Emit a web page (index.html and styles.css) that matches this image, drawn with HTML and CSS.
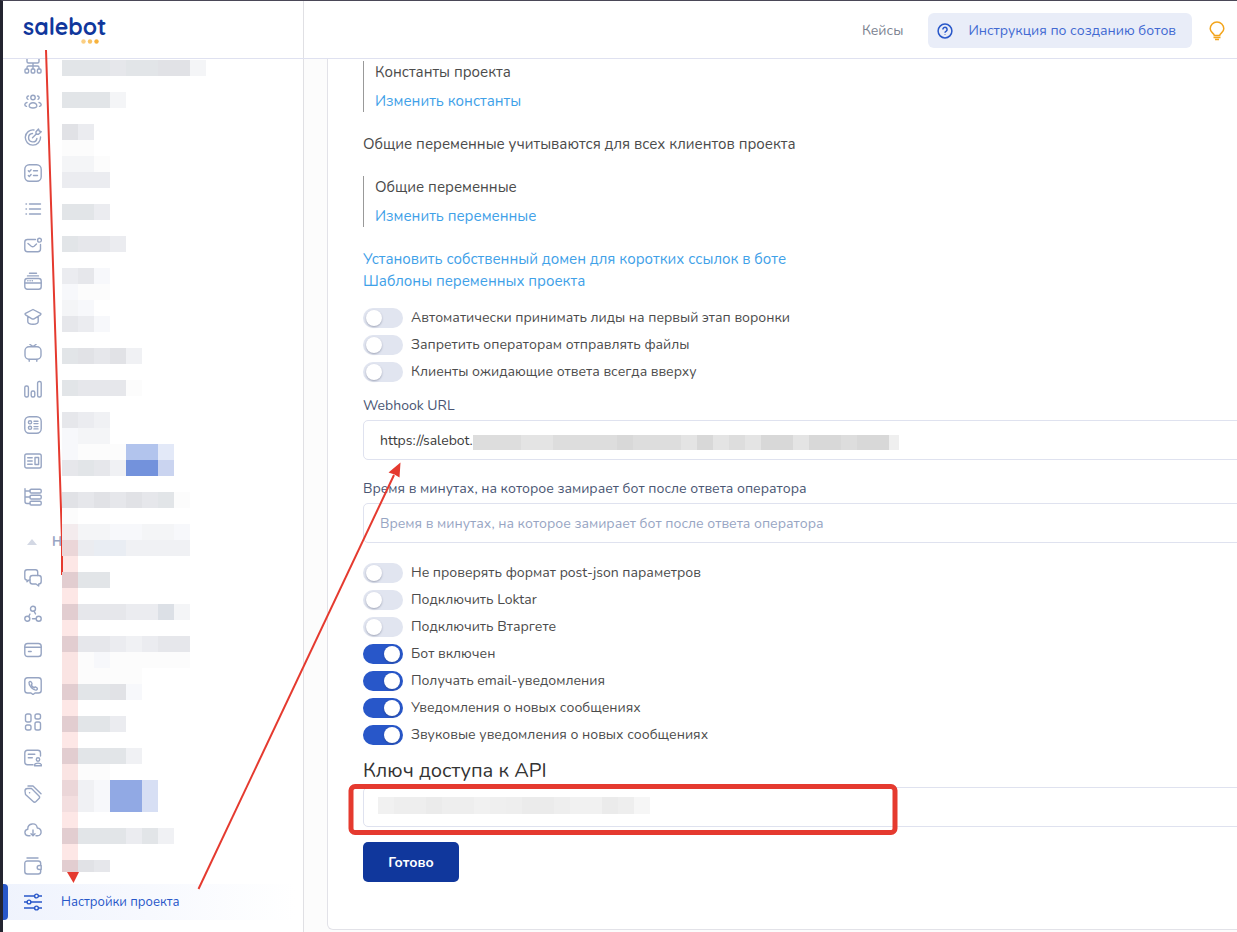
FILE: index.html
```html
<!DOCTYPE html>
<html lang="ru">
  <head>
    <meta charset="UTF-8" />
    <meta name="viewport" content="width=device-width, initial-scale=1.0" />
    <title>Настройки проекта</title>
    <link rel="stylesheet" href="styles.css">
  </head>
  <body>
    <header class="header">
      <a class="logo" href="#">salebot
        <svg class="logo-dots" viewBox="0 0 18 5"><circle cx="2.5" cy="2.5" r="2.2" fill="#fbcf83" /><circle cx="9" cy="2.5" r="2.2" fill="#f9c263" /><circle cx="15.5" cy="2.5" r="2.2" fill="#f7b23c" /></svg>
      </a>
      <div class="header-right">
        <a class="cases" href="#">Кейсы</a>
        <a class="guide" href="#">
          <svg class="guide-icon" viewBox="0 0 16 16"><circle cx="8" cy="8" r="6.9" /><path d="M5.9 6.4a2.1 2.1 0 1 1 3.3 1.7C8.3 8.6 8 8.900 8 9.700M8 11.400v.6" /></svg>
          Инструкция по созданию ботов
        </a>
        <a class="bulb" href="#" aria-label="Идеи">
          <svg viewBox="0 0 16 20"><path d="M5.300 14.500C5.200 12.400 1.200 11.500 1.200 7.800a6.800 6.800 0 0 1 13.600 0c0 3.700-4 4.600-4.100 6.700zM4.500 16.500h7M6 18.600h4" /></svg>
        </a>
      </div>
    </header>

    <div class="layout">
      <aside class="sidebar">
        <nav>
          <ul class="menu">
            <li><a href="#"><svg viewBox="0 0 18 18"><path d="M3 1v4.500q0 1.500 1.500 1.500h9q1.500 0 1.500-1.500V1M9 7v6M3 13v-1.500q0-1.500 1.500-1.500h9q1.500 0 1.500 1.500V13" /><rect x="1" y="13" width="3.600" height="4" rx="1" /><rect x="7.200" y="13" width="3.600" height="4" rx="1" /><rect x="13.400" y="13" width="3.600" height="4" rx="1" /></svg></a></li>
            <li><a href="#"><svg viewBox="0 0 18 18"><circle cx="9" cy="5.500" r="2.200" /><path d="M5.200 14.200c-.5-4.600 8.100-4.600 7.600 0q-.3 1.800-3.800 1.800t-3.800-1.800z" /><path d="M4.500 4a1.700 1.700 0 0 0-.5 3.300M13.500 4a1.700 1.700 0 0 1 .5 3.300M3 10.500C.2 11 .2 13.900 2.500 14.400M15 10.500c2.800.5 2.800 3.400.5 3.900" /></svg></a></li>
            <li><a href="#"><svg viewBox="0 0 18 18"><path d="M10 2a7.600 7.600 0 1 0 6.500 7M8.500 5.500a4.200 4.200 0 1 0 4.400 5M8.500 9.800l4-4M12 6.200V3.700L14.500 1l.7 2 2 .7-2.700 2.500z" /></svg></a></li>
            <li><a href="#"><svg viewBox="0 0 18 18"><rect x=".8" y=".8" width="16.400" height="16.400" rx="4.500" /><path d="M4.300 6.700l1 1 1.800-2M4.300 11.500l1 1 1.800-2M9.500 6.700h4M9.500 11.500h4" /></svg></a></li>
            <li><a href="#"><svg viewBox="0 0 18 18"><path d="M5.500 4h11M5.500 9h11M5.500 14h11M2 4h.5M2 9h.5M2 14h.5" /></svg></a></li>
            <li><a href="#"><svg viewBox="0 0 18 18"><path d="M11.500 3.500H3.500Q.8 3.500.8 6v7q0 2.700 2.700 2.700h10.300q2.700 0 2.700-2.700V8.500M4 7.500l3.300 2.700q1.400 1 2.800 0L12.500 8" /><circle cx="15.500" cy="4.200" r="1.900" /></svg></a></li>
            <li><a href="#"><svg viewBox="0 0 18 18"><rect x=".8" y="6.500" width="16.400" height="10.700" rx="2.500" /><path d="M.8 11h16.400M5.500 1.200h7M3.500 3.900h11M3.800 8.700h.2M6 8.700h.2M8.200 8.700h.2" /></svg></a></li>
            <li><a href="#"><svg viewBox="0 0 18 18"><path d="M9 1.500l7.500 3.800q.8.700 0 1.500L10 10.800q-1 .5-2 0L1.500 6.800q-.8-.8 0-1.500zM3.800 8.500v5c0 3.600 10.400 3.600 10.400 0v-5" /></svg></a></li>
            <li><a href="#"><svg viewBox="0 0 18 18"><rect x="1" y="2.700" width="16" height="12.500" rx="4" /><path d="M6 .5l3 2 3-2M5.200 15.500v1.700M12.800 15.500v1.700" /></svg></a></li>
            <li><a href="#"><svg viewBox="0 0 18 18"><rect x=".8" y="6" width="3.600" height="11" rx="1.500" /><rect x="7.200" y="11" width="3.600" height="6" rx="1.500" /><rect x="13.600" y="1.500" width="3.600" height="15.500" rx="1.500" /></svg></a></li>
            <li><a href="#"><svg viewBox="0 0 18 18"><rect x=".8" y=".8" width="16.400" height="16.400" rx="4.500" /><circle cx="6" cy="6.300" r="1.600" /><circle cx="6" cy="11.800" r="1.600" /><path d="M10 5.300h4M10 7.600h4M10 10.600h4M10 12.900h4" /></svg></a></li>
            <li><a href="#"><svg viewBox="0 0 18 18"><rect x=".8" y="2" width="16.400" height="14" rx="1.800" /><rect x="11" y="5.500" width="3.600" height="7" /><path d="M3.700 5.800h4.500M3.700 9h4.500M3.700 12.200h4.500" /></svg></a></li>
            <li><a href="#"><svg viewBox="0 0 18 18"><path d="M1 .8v12.700q0 2 2 2h3M1 3h5M1 9h5" /><rect x="6" y="1.200" width="11.200" height="3.800" rx="1.200" /><rect x="6" y="7.200" width="11.200" height="3.800" rx="1.200" /><rect x="6" y="13.200" width="11.200" height="3.800" rx="1.200" /></svg></a></li>
          </ul>
          <div class="menu-heading"><svg class="caret" viewBox="0 0 10 6"><path d="M0 6l5-6 5 6z" /></svg>Н</div>
          <ul class="menu">
            <li><a href="#"><svg viewBox="0 0 18 18"><path d="M6 11H5l-2 1.800V11Q.8 11 .8 8.800V3Q.8.800 3 .800h8.500q2.200 0 2.200 2.200v3.500" /><path d="M8.500 6.500h6.200q2.500 0 2.500 2.500v3.500q0 2.500-2.500 2.500v2L12 15H8.500Q6 15 6 12.500V9q0-2.500 2.500-2.500z" /></svg></a></li>
            <li><a href="#"><svg viewBox="0 0 18 18"><circle cx="9" cy="3.700" r="2.500" /><circle cx="3.300" cy="13.800" r="2.500" /><circle cx="14.700" cy="13.800" r="2.500" /><path d="M10 6.200l1.500 2.700M4.700 11.500L6 9M8.500 13.800h3" /></svg></a></li>
            <li><a href="#"><svg viewBox="0 0 18 18"><rect x=".8" y="2.500" width="16.400" height="13" rx="2.800" /><path d="M1 6.300h16M4.500 10.500h2.700" /></svg></a></li>
            <li><a href="#"><svg viewBox="0 0 18 18"><path d="M3.500.8h11q2.700 0 2.700 2.700v10q0 2.500-2.700 2.500H11l-2 1.500L7 16H3.500Q.8 16 .8 13.500v-10Q.8.800 3.500.800z" /><path d="M5 5.300q1-1.500 2-.5l1 1.500q.2.800-.8 1.600 1 2 2.900 2.800.8-1 1.600-.7l1.400 1q.8 1-.6 2C9.500 13.800 4.500 9 5 5.300z" /></svg></a></li>
            <li><a href="#"><svg viewBox="0 0 18 18"><rect x="1.500" y="1" width="5.500" height="8" rx="1.800" /><rect x="11" y="1" width="5.500" height="5" rx="1.800" /><rect x="1.500" y="12" width="5.500" height="5" rx="1.800" /><rect x="11" y="9" width="5.500" height="8" rx="1.800" /></svg></a></li>
            <li><a href="#"><svg viewBox="0 0 18 18"><path d="M9 15.800H3.500Q.8 15.800.8 13V4q0-2.700 2.700-2.700h10.300q2.700 0 2.700 2.700v3M4.300 5.200h6.500M4.300 8.700h4" /><circle cx="14" cy="10.500" r="1.700" /><path d="M10.500 16.700c0-3.500 7-3.500 7 0z" /></svg></a></li>
            <li><a href="#"><svg viewBox="0 0 18 18"><path d="M1 6q0-2.500 2.500-2.500h4L15 11q1.300 1.300 0 2.500l-3 3q-1.500 1.300-2.800 0L1.500 9.500zM4 1h5l8 7.800M5.500 7.700h.2" /></svg></a></li>
            <li><a href="#"><svg viewBox="0 0 18 18"><path d="M6 14.800H4.500C0 14.800-.2 8.700 3.800 8.200 3.500 1.800 12.500 1 13.300 7c5 .5 5 7.800.2 7.800H12M9 9v5.500M7 12.800l2 2 2-2" /></svg></a></li>
            <li><a href="#"><svg viewBox="0 0 18 18"><path d="M3 1h11M16.700 8.500V6.500q0-2.500-2.500-2.500H3.300Q.8 4 .8 6.500v8Q.8 17 3.300 17h10.900q2.500 0 2.500-2.500v-2M17.200 8.500h-2a2 2 0 0 0 0 4h2z" /></svg></a></li>
            <li><a class="active" href="#"><svg viewBox="0 0 18 18"><path d="M0 3h10.500M14.500 3H18M0 9h3M7 9h11M0 15h10.500M14.500 15H18" /><circle cx="12.500" cy="3" r="1.900" /><circle cx="5" cy="9" r="1.900" /><circle cx="12.500" cy="15" r="1.900" /></svg>Настройки проекта</a></li>
          </ul>
        </nav>
      </aside>

      <main class="main">
        <form class="card">
          <div class="quote">
            <span>Константы проекта</span>
            <a href="#">Изменить константы</a>
          </div>
          <p>Общие переменные учитываются для всех клиентов проекта</p>
          <div class="quote">
            <span>Общие переменные</span>
            <a href="#">Изменить переменные</a>
          </div>
          <div class="links">
            <a href="#">Установить собственный домен для коротких ссылок в боте</a>
            <a href="#">Шаблоны переменных проекта</a>
          </div>

          <div class="toggles">
            <label class="toggle"><input type="checkbox" />Автоматически принимать лиды на первый этап воронки</label>
            <label class="toggle"><input type="checkbox" />Запретить операторам отправлять файлы</label>
            <label class="toggle"><input type="checkbox" />Клиенты ожидающие ответа всегда вверху</label>
          </div>

          <label class="field-label" for="webhook">Webhook URL</label>
          <div class="field">
            <input type="text" id="webhook" value="https://salebot." />
            <svg class="mask mask-webhook" id="maskWebhook"></svg>
          </div>

          <label class="field-label second" for="pause">Время в минутах, на которое замирает бот после ответа оператора</label>
          <div class="field">
            <input type="text" id="pause" placeholder="Время в минутах, на которое замирает бот после ответа оператора" />
          </div>

          <div class="toggles lower">
            <label class="toggle"><input type="checkbox" />Не проверять формат post-json параметров</label>
            <label class="toggle"><input type="checkbox" />Подключить Loktar</label>
            <label class="toggle"><input type="checkbox" />Подключить Втаргете</label>
            <label class="toggle"><input type="checkbox" checked />Бот включен</label>
            <label class="toggle"><input type="checkbox" checked />Получать email-уведомления</label>
            <label class="toggle"><input type="checkbox" checked />Уведомления о новых сообщениях</label>
            <label class="toggle"><input type="checkbox" checked />Звуковые уведомления о новых сообщениях</label>
          </div>

          <h3><label for="apiKey">Ключ доступа к API</label></h3>
          <div class="field">
            <input type="text" id="apiKey" />
            <svg class="mask mask-key" id="maskKey"></svg>
          </div>
          <button type="button" class="submit">Готово</button>
        </form>
      </main>
    </div>

    <!-- mosaic over the menu labels, arrows and the frame round the key -->
    <svg class="notes">
      <path class="arrow" d="M46 50L62 540V575" />
      <g id="mosaic"></g>
      <rect class="shade light" x="62" y="524" width="16" height="16" />
      <rect class="shade" x="62" y="540" width="16" height="332" />
      <path class="arrow-head" d="M67 872h12l-5.500 11z" />
      <path class="arrow" d="M198.500 889L394 475" />
      <path class="arrow-head" d="M400.500 462.500l-1 15-5-3-6-2z" />
      <rect class="frame" x="351" y="786.500" width="544" height="46" rx="4" />
    </svg>

    <script>
      const ns = 'http://www.w3.org/2000/svg';

      // one letter = one 16px cell
      const colors = {
        a: '#e1e2e6', b: '#e2e5e8', c: '#e6e7eb', d: '#ebecf0', e: '#f4f5f7',
        f: '#fcfcfc', g: '#dce0e6', h: '#f7f8fb', i: '#e9edf3', j: '#f0f1f4',
        k: '#b2c4ed', l: '#e3e9f8', m: '#7392dc', n: '#cad4f0', o: '#91a9e4',
        p: '#d7dff4', 1: '#d8d8d8', 2: '#dddddd', 3: '#e4e4e4', 4: '#efefef',
        5: '#ebebeb', 6: '#eeeeee', 7: '#f1f1f1', 8: '#f6f6f6'
      };

      const rows = [
        [60, 'bbbcbbaae'], [92, 'bbbe'], [124, 'ad'], [140, 'ff'],
        [156, 'eef'], [172, 'ddd'], [204, 'bbd'], [236, 'bccd'],
        [268, 'dch'], [284, 'hff'], [300, 'eh'], [316, 'cdh'],
        [348, 'bacaj'], [380, 'bcccf'], [412, 'cdj'], [428, 'hee'],
        [444, 'hfffkkl'], [460, 'cbcjmmn'], [492, 'acacacbf'], [508, 'f'],
        [524, 'eeehheeh'], [540, 'ddiijjjj'], [572, 'abb'],
        [604, 'acccddge'], [636, 'accdjdcc'], [652, 'ffhfffff'],
        [668, 'fffff'], [684, 'abbah'], [716, 'abbd'], [748, 'abbbj'],
        [764, 'fff'], [780, 'djhoop'], [796, 'ejhoop'],
        [828, 'abbbdbj'], [860, 'aac']
      ];

      function drawRow(target, y, cells, height) {
        [...cells].forEach((cell, i) => {
          const rect = document.createElementNS(ns, 'rect');
          rect.setAttribute('x', i * 16);
          rect.setAttribute('y', y);
          rect.setAttribute('width', 16);
          rect.setAttribute('height', height);
          rect.setAttribute('fill', colors[cell]);
          target.appendChild(rect);
        });
      }

      const mosaic = document.getElementById('mosaic');
      rows.forEach(([y, cells]) => drawRow(mosaic, y, cells, y === 860 ? 12 : 16));
      drawRow(document.getElementById('maskWebhook'), 0, '222332222122231323113112114', 15);
      drawRow(document.getElementById('maskKey'), 0, '76656674655677568', 17);
    </script>
  </body>
</html>
```
FILE: styles.css
```css
* {
  box-sizing: border-box;
}
body {
  margin: 0;
  border-top: 1px solid #4a4757;
  border-left: 3px solid #232430;
  background: #fff;
  color: #4b4b4b;
  font-family: Nunito, 'Open Sans', sans-serif;
  font-size: 15px;
  line-height: 22px;
}
a {
  color: #3fa1e8;
  text-decoration: none;
}
svg {
  display: block;
  flex: none;
}
.header {
  display: flex;
  height: 58px;
  border-bottom: 1px solid #dfe1f0;
}
.logo {
  position: relative;
  width: 301px;
  padding: 9px 20px;
  border-right: 1px solid #e0e0e4;
  color: #10379c;
  font-family: Quicksand, Lato, sans-serif;
  font-size: 23px;
  font-weight: 700;
  line-height: 34px;
}
.logo-dots {
  position: absolute;
  left: 78px;
  top: 38px;
  width: 18px;
  height: 5px;
}
.header-right {
  flex: 1;
  display: flex;
  justify-content: flex-end;
  align-items: center;
  gap: 25px;
  padding: 2px 12px 0 0;
  font-size: 14px;
}
.cases {
  color: #7b8290;
}
.guide {
  display: flex;
  align-items: center;
  gap: 15px;
  height: 35px;
  padding: 0 16px 0 9px;
  border-radius: 6px;
  background: #e9edf8;
  color: #4169d2;
}
.guide-icon {
  width: 16px;
  height: 16px;
  fill: none;
  stroke: #2857c9;
  stroke-width: 1.5;
}
.bulb {
  margin-left: -8px;
}
.bulb svg {
  width: 16px;
  height: 20px;
  fill: none;
  stroke: #f3a51c;
  stroke-width: 1.5;
}
.layout {
  display: flex;
  min-height: calc(100vh - 59px);
}
.sidebar {
  flex: none;
  width: 301px;
  overflow: hidden;
  border-right: 1px solid #e0e0e4;
}
.sidebar nav {
  margin-top: -12px;
}
.menu {
  margin: 0;
  padding: 0;
  list-style: none;
}
.menu a {
  display: flex;
  align-items: center;
  gap: 19px;
  height: 36px;
  padding-left: 21px;
  color: #2857c9;
  font-size: 13px;
}
.menu svg {
  width: 18px;
  height: 18px;
  fill: none;
  stroke: #97a5c3;
  stroke-width: 1.4;
  stroke-linecap: round;
  stroke-linejoin: round;
}
.menu .active {
  position: relative;
  margin-right: 8px;
  background: linear-gradient(to right, #eff3fd, #fff);
}
.menu .active::before {
  content: '';
  position: absolute;
  left: 0;
  width: 5px;
  height: 36px;
  border-radius: 0 4px 4px 0;
  background: #2857c9;
}
.menu .active svg {
  stroke: #2857c9;
}
.menu-heading {
  display: flex;
  align-items: center;
  gap: 15px;
  height: 45px;
  padding: 8px 0 0 24px;
  color: #97a5c3;
  font-size: 13px;
  font-weight: 700;
}
.caret {
  width: 10px;
  height: 6px;
  fill: #d3d8e4;
}
.main {
  flex: 1;
  min-width: 0;
  overflow: hidden;
  padding-left: 23px;
  background: #fcfcfc;
}
.card {
  width: calc(100% + 40px);
  padding: 2px 0 47px 35px;
  border: 1px solid #e2e2e8;
  border-top: 0;
  border-radius: 0 0 6px 6px;
  background: #fff;
}
.quote {
  display: flex;
  flex-direction: column;
  align-items: flex-start;
  gap: 7px;
  padding-left: 11px;
  border-left: 1px solid #999;
}
.card p {
  margin: 21px 0;
}
.links {
  display: flex;
  flex-direction: column;
  align-items: flex-start;
  margin: 21px 0 16px;
}
.toggles {
  display: flex;
  flex-direction: column;
  align-items: flex-start;
  gap: 7px;
}
.toggles.lower {
  margin-top: 20px;
}
.toggle {
  display: flex;
  align-items: center;
  gap: 8px;
  font-size: 14px;
  line-height: 20px;
}
.toggle input {
  appearance: none;
  width: 40px;
  height: 20px;
  margin: 0;
  padding: 2px 3px;
  border-radius: 10px;
  background: #e1e5f0;
}
.toggle input::before {
  content: '';
  display: block;
  width: 16px;
  height: 16px;
  border-radius: 50%;
  background: #fff;
  box-shadow: 0 1px 2px rgba(40, 50, 80, 0.35);
}
.toggle input:checked {
  background: #2857c9;
}
.toggle input:checked::before {
  margin-left: 18px;
}
.field-label {
  display: block;
  margin: 14px 0 4px;
  color: #4a5673;
  font-size: 14px;
  line-height: 20px;
}
.field-label.second {
  margin-top: 19px;
}
.field {
  position: relative;
}
.field input {
  display: block;
  width: 100%;
  height: 40px;
  padding: 0 16px;
  border: 1px solid #dfe2ef;
  border-radius: 5px;
  background: #fff;
  color: #3c3c3c;
  font-family: inherit;
  font-size: 14px;
}
.field input::placeholder {
  color: #97a5c3;
  opacity: 1;
}
.mask {
  position: absolute;
  height: 17px;
}
.mask-webhook {
  left: 110px;
  top: 15px;
  width: 426px;
}
.mask-key {
  left: 15px;
  top: 10px;
  width: 272px;
}
.card h3 {
  margin: 12px 0 2px;
  color: #333;
  font-size: 20px;
  font-weight: 400;
  line-height: 28px;
}
.submit {
  display: block;
  width: 96px;
  height: 40px;
  margin-top: 15px;
  border: 0;
  border-radius: 5px;
  background: #10379c;
  color: #fff;
  font-family: inherit;
  font-size: 14px;
  font-weight: 700;
  cursor: pointer;
}
.notes {
  position: absolute;
  left: 0;
  top: 0;
  width: 900px;
  height: 930px;
  pointer-events: none;
}
#mosaic {
  transform: translateX(62px);
}
.arrow {
  fill: none;
  stroke: #e53a2f;
  stroke-width: 2;
}
.arrow-head {
  fill: #e53a2f;
}
.shade {
  fill: #f03c32;
  opacity: 0.12;
}
.shade.light {
  opacity: 0.05;
}
.frame {
  fill: none;
  stroke: #e53a2f;
  stroke-width: 5;
}
```
